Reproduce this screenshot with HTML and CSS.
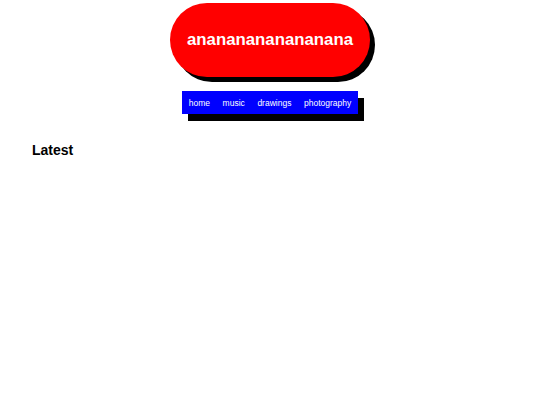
FILE: index.html
```html
<!DOCTYPE html>
<html>
<head>
<meta charset="utf-8">
<link rel="stylesheet" href="styles.css">
</head>
<body>
<header class="site-header">
  <h1 class="logo">anananananananana</h1>
  <nav class="nav">
    <a href="#">home</a>
    <a href="#">music</a>
    <a href="#">drawings</a>
    <a href="#">photography</a>
  </nav>
</header>
<main class="content">
  <h2 class="section-title">Latest</h2>
</main>
</body>
</html>
```

FILE: styles.css
```css
html, body {
  margin: 0;
  padding: 0;
  background: #fff;
  font-family: "Liberation Sans", Arial, sans-serif;
}
.site-header {
  display: flex;
  flex-direction: column;
  align-items: center;
  padding-top: 3px;
}
.logo {
  margin: 0;
  width: 200px;
  height: 74px;
  border-radius: 37px;
  background: #ff0000;
  color: #fff;
  font-size: 16.8px;
  font-weight: bold;
  display: flex;
  align-items: center;
  justify-content: center;
  box-shadow: 5px 5px 0 #000;
}
.nav {
  margin-top: 14px;
  display: flex;
  align-items: center;
  height: 23px;
  padding: 0;
  background: #0000ff;
  box-shadow: 6px 7px 0 #000;
}
.nav a {
  color: #fff;
  text-decoration: none;
  font-size: 8.5px;
  padding: 0 6.3px;
}
.content {
  padding: 0 32px;
}
.section-title {
  margin: 28px 0 0;
  font-size: 14px;
  font-weight: bold;
  color: #000;
}
```
